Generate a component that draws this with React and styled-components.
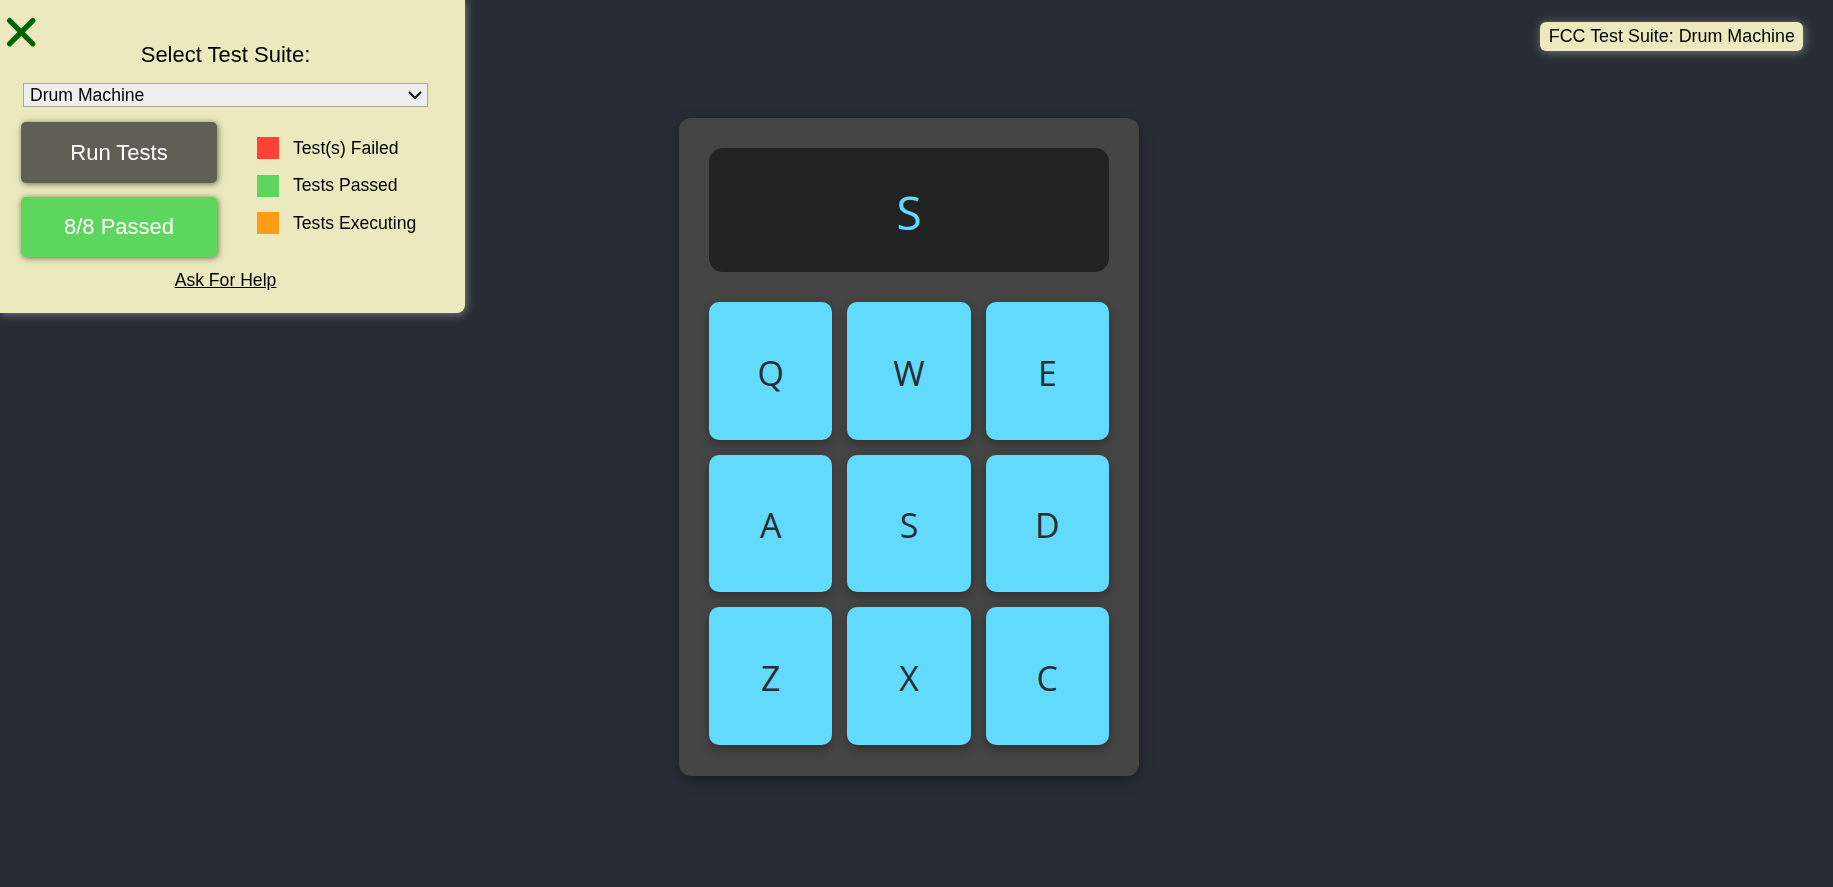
import React from "react";
import styled, { createGlobalStyle } from "styled-components";

const Global = createGlobalStyle`
  html, body { margin: 0; padding: 0; background: #282c34; }
  body { font-family: "Open Sans", "Noto Sans", sans-serif; overflow: hidden; }
  * { box-sizing: border-box; }
`;

const Page = styled.main`
  min-height: 100vh;
  display: flex;
  justify-content: center;
  align-items: flex-start;
  padding: 118px 15px 0 0;
`;

const Machine = styled.div`
  width: 460px;
  background: #444444;
  border-radius: 12px;
  padding: 30px 30px 31px;
  display: flex;
  flex-direction: column;
  gap: 30px;
  box-shadow: 0 4px 14px rgba(0, 0, 0, 0.35);
`;

const Display = styled.div`
  height: 124px;
  border-radius: 14px;
  background: #222222;
  color: #61dafb;
  font-size: 46px;
  display: flex;
  align-items: center;
  justify-content: center;
  padding-top: 4px;
`;

const Pads = styled.div`
  height: 443px;
  display: grid;
  grid-template-columns: repeat(3, 1fr);
  grid-template-rows: repeat(3, 1fr);
  gap: 15px;
`;

const Pad = styled.button`
  border: none;
  border-radius: 10px;
  background: #61dafb;
  color: #282c34;
  font-family: "Open Sans", "Noto Sans", sans-serif;
  font-size: 34px;
  display: flex;
  align-items: center;
  justify-content: center;
  padding: 4px 0 0;
  box-shadow: 0 4px 10px rgba(0, 0, 0, 0.3);
  cursor: pointer;
`;

const Panel = styled.aside`
  position: fixed;
  top: 0;
  left: 0;
  width: 465px;
  height: 313px;
  background: #ebe9bd;
  border-bottom-right-radius: 8px;
  box-shadow: 1px 1px 10px gray;
  font-family: "Liberation Sans", Arial, sans-serif;
  color: #000;
  display: flex;
  flex-direction: column;
  align-items: center;
  padding: 42px 14px 0 0;
`;

const Close = styled.button`
  position: absolute;
  top: 17px;
  left: 6px;
  width: 31px;
  height: 31px;
  padding: 0;
  border: none;
  background: transparent;
  cursor: pointer;
  display: block;
`;

const Title = styled.div`
  font-size: 22px;
  line-height: 25px;
`;

const SelectWrap = styled.div`
  margin-top: 16px;
  position: relative;
  width: 405px;
  height: 24px;
`;

const Select = styled.select`
  appearance: none;
  -webkit-appearance: none;
  width: 100%;
  height: 100%;
  font-family: "Liberation Sans", Arial, sans-serif;
  font-size: 17.6px;
  color: #000;
  background: #efefef;
  border: 1px solid #a7a7a7;
  border-radius: 0;
  padding: 0 28px 0 6px;
`;

const Chevron = styled.svg`
  position: absolute;
  right: 6px;
  top: 8px;
  pointer-events: none;
`;

const Row = styled.div`
  margin-top: 15px;
  align-self: stretch;
  padding-left: 21px;
  display: flex;
  align-items: flex-start;
`;

const ButtonCol = styled.div`
  display: flex;
  flex-direction: column;
  gap: 14px;
`;

const BigButton = styled.button`
  width: 196px;
  height: ${(p) => p.$h}px;
  border: none;
  border-radius: 5px;
  background: ${(p) => p.$bg};
  color: #fff;
  font-family: "Liberation Sans", Arial, sans-serif;
  font-size: 22px;
  box-shadow: 1px 1px 6px rgba(0, 0, 0, 0.55);
  cursor: pointer;
`;

const Legend = styled.ul`
  list-style: none;
  margin: 15px 0 0 40px;
  padding: 0;
  display: flex;
  flex-direction: column;
  gap: 15.5px;
`;

const LegendItem = styled.li`
  display: flex;
  align-items: center;
  gap: 14px;
  height: 22px;
  font-size: 17.6px;
`;

const Swatch = styled.span`
  width: 22px;
  height: 22px;
  background: ${(p) => p.$c};
  display: block;
`;

const Help = styled.a`
  margin-top: 13px;
  font-size: 17.6px;
  color: #000;
  text-decoration: underline;
  line-height: 20px;
`;

const Badge = styled.div`
  position: fixed;
  top: 22px;
  right: 30px;
  height: 29px;
  line-height: 29px;
  padding: 0 8px 0 9px;
  background: #ebe9bd;
  border-radius: 6px;
  font-family: "Liberation Sans", Arial, sans-serif;
  font-size: 17.9px;
  color: #000;
  box-shadow: 1px 1px 10px gray;
`;

const keys = ["Q", "W", "E", "A", "S", "D", "Z", "X", "C"];

export default function App() {
  return (
    <>
      <Global />
      <Page>
        <Machine id="drum-machine">
          <Display id="display">S</Display>
          <Pads>
            {keys.map((k) => (
              <Pad key={k} className="drum-pad">
                {k}
              </Pad>
            ))}
          </Pads>
        </Machine>
      </Page>

      <Panel>
        <Close aria-label="close">
          <svg width="31" height="31" viewBox="0 0 31 31">
            <g stroke="#006400" strokeWidth="5.2" strokeLinecap="round">
              <line x1="3.6" y1="3.6" x2="26.8" y2="26.8" />
              <line x1="26.8" y1="3.6" x2="3.6" y2="26.8" />
            </g>
          </svg>
        </Close>
        <Title>Select Test Suite:</Title>
        <SelectWrap>
          <Select defaultValue="drum">
            <option value="drum">Drum Machine</option>
          </Select>
          <Chevron width="14" height="9" viewBox="0 0 14 9">
            <polyline
              points="1.5,1.5 7,7 12.5,1.5"
              fill="none"
              stroke="#111"
              strokeWidth="2"
              strokeLinecap="round"
              strokeLinejoin="round"
            />
          </Chevron>
        </SelectWrap>
        <Row>
          <ButtonCol>
            <BigButton $bg="#605f55" $h={61}>Run Tests</BigButton>
            <BigButton $bg="#5cd65c" $h={60}>8/8 Passed</BigButton>
          </ButtonCol>
          <Legend>
            <LegendItem>
              <Swatch $c="#ff4136" />
              Test(s) Failed
            </LegendItem>
            <LegendItem>
              <Swatch $c="#5cd65c" />
              Tests Passed
            </LegendItem>
            <LegendItem>
              <Swatch $c="#ff9c14" />
              Tests Executing
            </LegendItem>
          </Legend>
        </Row>
        <Help href="#">Ask For Help</Help>
      </Panel>

      <Badge>FCC Test Suite: Drum Machine</Badge>
    </>
  );
}
